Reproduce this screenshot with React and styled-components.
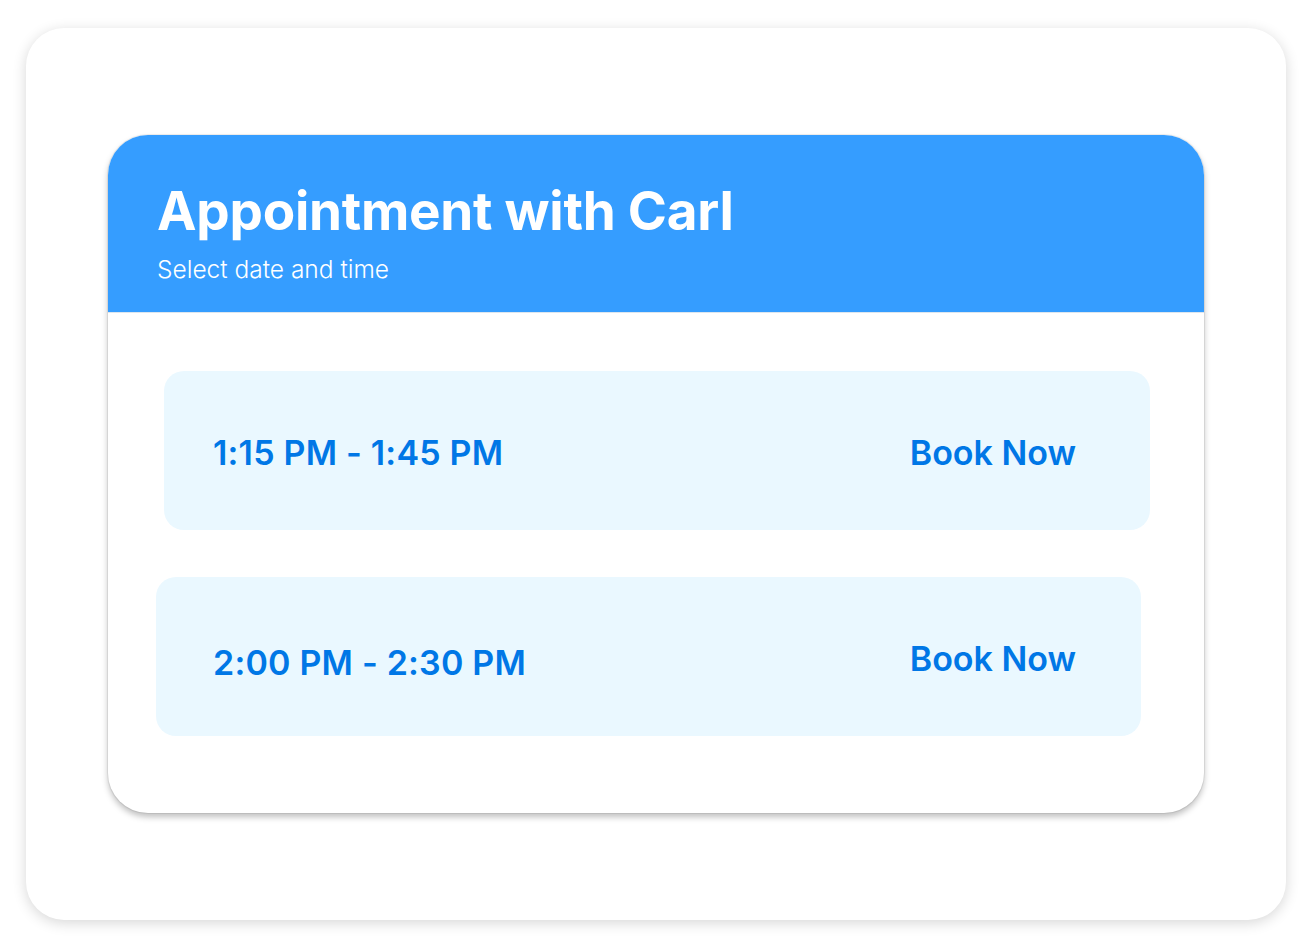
import React from "react";
import styled, { createGlobalStyle } from "styled-components";

const GlobalStyle = createGlobalStyle`
  html, body {
    margin: 0;
    background: #ffffff;
  }
  body {
    font-family: Inter, "Noto Sans", sans-serif;
    padding: 28px 25px 23px 26px;
  }
`;

const slots = [
  { time: "1:15 PM - 1:45 PM", ml: 56, mr: 54, timeShift: 0 },
  { time: "2:00 PM - 2:30 PM", ml: 48, mr: 63, timeShift: 4 },
];

function App() {
  return (
    <>
      <GlobalStyle />
      <Frame>
        <Card>
          <Header>
            <Title>Appointment with Carl</Title>
            <Subtitle>Select date and time</Subtitle>
          </Header>
          <Body>
            {slots.map((slot) => (
              <Slot key={slot.time} $ml={slot.ml} $mr={slot.mr}>
                <Time $shift={slot.timeShift} $indent={213 - 108 - slot.ml}>
                  {slot.time}
                </Time>
                <Book $right={1204 - slot.mr - 1076}>Book Now</Book>
              </Slot>
            ))}
          </Body>
        </Card>
      </Frame>
    </>
  );
}

const Frame = styled.div`
  box-sizing: border-box;
  width: 1260px;
  height: 892px;
  background: #ffffff;
  border-radius: 38px;
  box-shadow: 0 3px 14px rgba(0, 0, 0, 0.16);
  padding: 107px 82px;
`;

const Card = styled.div`
  height: 678px;
  background: #ffffff;
  border-radius: 40px;
  overflow: hidden;
  box-shadow: 0 0 0 1px rgba(0, 0, 0, 0.06), 0 4px 6px rgba(0, 0, 0, 0.25);
  display: flex;
  flex-direction: column;
`;

const Header = styled.div`
  height: 178px;
  box-sizing: border-box;
  background: #359dff;
  padding: 46px 49px 0;
  border-bottom: 1px solid #dde6ee;
`;

const Title = styled.h1`
  margin: 0;
  color: #ffffff;
  font-size: 53px;
  font-weight: 700;
  line-height: 60px;
  letter-spacing: -0.25px;
`;

const Subtitle = styled.p`
  margin: 14px 0 0;
  color: #ffffff;
  font-size: 24.5px;
  font-weight: 300;
  line-height: 28px;
`;

const Body = styled.div`
  display: flex;
  flex-direction: column;
  gap: 47px;
  padding-top: 58px;
`;

const Slot = styled.div`
  height: 159px;
  margin: 0 ${(p) => p.$mr}px 0 ${(p) => p.$ml}px;
  background: #eaf8ff;
  border-radius: 20px;
  display: flex;
  align-items: center;
  justify-content: space-between;
  padding-top: 4px;
  box-sizing: border-box;
`;

const Time = styled.span`
  margin-left: ${(p) => p.$indent}px;
  margin-top: ${(p) => p.$shift * 2}px;
  color: #0077e6;
  font-size: 34px;
  font-weight: 600;
  letter-spacing: 0.2px;
`;

const Book = styled.button`
  margin-right: ${(p) => p.$right}px;
  border: none;
  background: none;
  padding: 0;
  cursor: pointer;
  font-family: inherit;
  color: #0077e6;
  font-size: 34px;
  font-weight: 600;
`;

export default App;
